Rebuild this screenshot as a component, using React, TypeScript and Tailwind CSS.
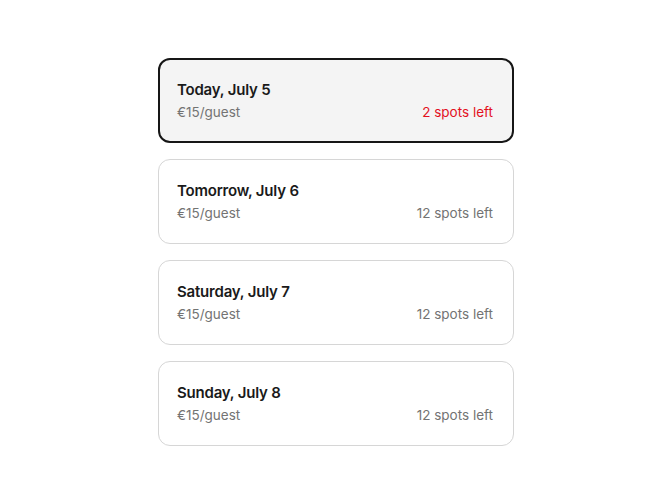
const dates = [
  { day: 'Today, July 5', price: '€15/guest', spots: '2 spots left', low: true },
  { day: 'Tomorrow, July 6', price: '€15/guest', spots: '12 spots left', low: false },
  { day: 'Saturday, July 7', price: '€15/guest', spots: '12 spots left', low: false },
  { day: 'Sunday, July 8', price: '€15/guest', spots: '12 spots left', low: false },
]

export default function App() {
  return (
    <div
      className="min-h-[504px] bg-white flex items-center justify-center pl-[2px]"
      style={{ fontFamily: 'Inter, "Noto Sans", sans-serif' }}
    >
      <div className="w-[356px] flex flex-col gap-4">
        {dates.map((d, i) => {
          const selected = i === 0
          return (
            <div
              key={d.day}
              className={
                selected
                  ? 'h-[85px] rounded-xl border-2 border-[#161616] bg-[#f4f4f4] pl-[17px] pr-[19px] flex flex-col justify-center'
                  : 'h-[85px] rounded-xl border border-[#d6d6d6] bg-white pl-[18px] pr-5 flex flex-col justify-center'
              }
            >
              <div className="text-[15px] leading-[21px] font-semibold tracking-[-0.2px] text-[#1a1a1a]">
                {d.day}
              </div>
              <div className="mt-0.5 flex justify-between text-[13.5px] leading-5">
                <span className="text-[#737373]">{d.price}</span>
                <span className={d.low ? 'text-[#e3101e]' : 'text-[#737373]'}>
                  {d.spots}
                </span>
              </div>
            </div>
          )
        })}
      </div>
    </div>
  )
}
